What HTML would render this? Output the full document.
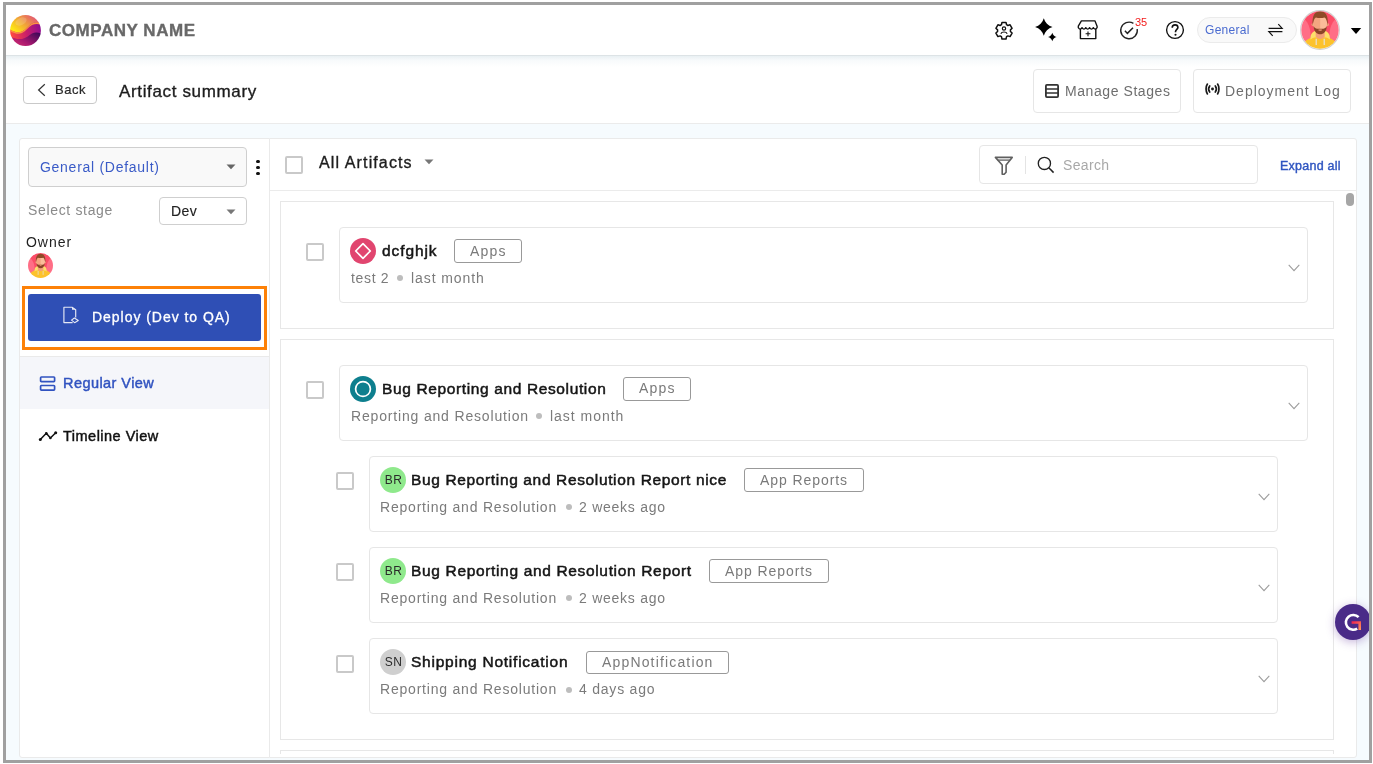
<!DOCTYPE html>
<html><head><meta charset="utf-8">
<style>
*{box-sizing:border-box;margin:0;padding:0}
html,body{width:1373px;height:764px;overflow:hidden;background:#fff;font-family:"Liberation Sans",sans-serif;color:#222}
.a{position:absolute;display:block}
.t{position:absolute;white-space:nowrap;line-height:1;will-change:transform}
#frame{position:absolute;left:3px;top:2px;width:1369px;height:761px;border:3px solid #a0a0a0;z-index:50;pointer-events:none}
#app{position:absolute;left:6px;top:5px;width:1363px;height:755px;overflow:hidden;background:#f6fbfe}
</style></head>
<body>
<div id="app">
<div style="position:absolute;left:-6px;top:-5px;width:1373px;height:764px">
<!-- header -->
<div class="a" style="left:6px;top:5px;width:1363px;height:51px;background:#fff;border-bottom:1px solid #dde3e6"></div>
<div class="a" style="left:6px;top:56px;width:1363px;height:68px;background:#fff;border-bottom:1px solid #ebebeb"></div>
<div class="a" style="left:6px;top:56px;width:1363px;height:11px;background:linear-gradient(#e9f0f3,rgba(240,245,248,0.5) 40%,rgba(255,255,255,0))"></div>

<!-- logo -->
<svg class="a" style="left:10px;top:14.5px" width="31" height="31" viewBox="0 0 31 31">
 <defs>
  <mask id="lc"><circle cx="15.5" cy="15.5" r="15.4" fill="#fff"/></mask>
  <linearGradient id="lg1" x1="0" y1="0.7" x2="1" y2="0.1"><stop offset="0" stop-color="#ffea10"/><stop offset="0.42" stop-color="#f0a238"/><stop offset="0.75" stop-color="#e5636a"/><stop offset="1" stop-color="#dc4478"/></linearGradient>
  <linearGradient id="lg2" x1="0" y1="0.5" x2="1" y2="0.3"><stop offset="0" stop-color="#ff4a40"/><stop offset="0.5" stop-color="#c91f6a"/><stop offset="1" stop-color="#8c0c92"/></linearGradient>
  <linearGradient id="lg3" x1="0" y1="0.9" x2="1" y2="0.2"><stop offset="0" stop-color="#dc3470"/><stop offset="0.45" stop-color="#a8186f"/><stop offset="1" stop-color="#3f0858"/></linearGradient>
 </defs>
 <g mask="url(#lc)">
  <rect width="31" height="31" fill="url(#lg2)"/>
  <path d="M-1 -1 H32 V8.2 C28 7 25 7 22 8.5 C18.5 10.5 16 14.5 12 16.5 C8 18.2 4 17 -1 13.8 Z" fill="url(#lg1)"/>
  <path d="M-1 13.8 C4 17 8 18.2 12 16.5 C16 14.5 18.5 10.5 22 8.5 C25 7 28 7 32 8.2 V9.8 C28 8.6 25 8.6 22 10.1 C18.5 12.1 16 16.1 12 18.1 C8 19.8 4 18.6 -1 15.4Z" fill="#fb9242"/>
  <path d="M-1 21 C3 23 7 24.5 12 24 C16 23.5 19 20.5 22 18.6 C25 17 28 17 32 19 V32 H-1 Z" fill="url(#lg3)"/>
  <ellipse cx="11" cy="6.5" rx="6" ry="3.6" transform="rotate(-25 11 6.5)" fill="#fff" opacity="0.16"/>
 </g>
</svg>

<!-- header icons -->
<svg class="a" style="left:992.9px;top:19px" width="22" height="22" viewBox="0 0 22 22">
 <g transform="translate(11 11) scale(0.88) translate(-11 -11)">
 <path d="M8.7 2.4 h4.6 l0.6 2.6 l1.5 0.9 l2.5-0.8 l2.3 4 l-1.9 1.8 v1.8 l1.9 1.8 l-2.3 4 l-2.5-0.8 l-1.5 0.9 l-0.6 2.6 h-4.6 l-0.6-2.6 l-1.5-0.9 l-2.5 0.8 l-2.3-4 l1.9-1.8 v-1.8 l-1.9-1.8 l2.3-4 l2.5 0.8 l1.5-0.9 Z" fill="none" stroke="#111" stroke-width="1.7" stroke-linejoin="round"/>
 <circle cx="11" cy="9.3" r="1.9" fill="none" stroke="#111" stroke-width="1.3"/>
 <path d="M7.4 15.2 C8.5 12.6 13.5 12.6 14.6 15.2" fill="none" stroke="#111" stroke-width="1.3"/>
 </g>
</svg>
<svg class="a" style="left:1034px;top:18px" width="24" height="24" viewBox="0 0 24 24">
 <path d="M9.80 0.30 C11.03 4.70 14.10 7.77 18.50 9.00 C14.10 10.23 11.03 13.30 9.80 17.70 C8.57 13.30 5.50 10.23 1.10 9.00 C5.50 7.77 8.57 4.70 9.80 0.30 Z" fill="#000"/>
 <path d="M18.30 14.70 C18.91 16.88 20.42 18.39 22.60 19.00 C20.42 19.61 18.91 21.12 18.30 23.30 C17.69 21.12 16.18 19.61 14.00 19.00 C16.18 18.39 17.69 16.88 18.30 14.70 Z" fill="#000"/>
</svg>
<svg class="a" style="left:1077px;top:20px" width="22" height="20" viewBox="0 0 22 20">
 <path d="M4.4 0.8 H17.9 L20.1 6.2 V7.6 Q18.22 10.6 16.34 7.6 Q14.46 10.6 12.58 7.6 Q10.70 10.6 8.82 7.6 Q6.94 10.6 5.06 7.6 Q3.18 10.6 1.30 7.6 V6.2 Z" fill="none" stroke="#111" stroke-width="1.35" stroke-linejoin="round"/>
 <path d="M3.4 8.8 V18.6 H18.8 V8.8" fill="none" stroke="#111" stroke-width="1.4" stroke-linejoin="round"/>
 <path d="M11 11.4 V16.2 M8.6 13.8 H13.4" stroke="#111" stroke-width="1.1"/>
</svg>
<svg class="a" style="left:1119px;top:20px" width="20" height="20" viewBox="0 0 20 20">
 <path d="M14.4 3.4 A8.3 8.3 0 1 0 18.2 9" fill="none" stroke="#222" stroke-width="1.35"/>
 <path d="M5.9 10.8 L8.4 13.4 L14 7.8" fill="none" stroke="#222" stroke-width="1.5"/>
</svg>
<svg class="a" style="left:1165px;top:20px" width="20" height="20" viewBox="0 0 20 20">
 <circle cx="10" cy="10" r="8.4" fill="none" stroke="#111" stroke-width="1.35"/>
 <path d="M7.2 7.7 C7.2 5.9 8.4 4.9 10.1 4.9 C11.8 4.9 12.9 6 12.9 7.5 C12.9 9.3 10.5 9.6 10.5 11.8 V12.2" fill="none" stroke="#111" stroke-width="1.6"/>
 <circle cx="10.5" cy="14.8" r="1.05" fill="#111"/>
</svg>
<!-- General pill -->
<div class="a" style="left:1197px;top:17px;width:100px;height:26px;border-radius:13px;background:#f9f9f9;border:1px solid #ebebeb"></div>
<svg class="a" style="left:1267px;top:23px" width="17" height="14" viewBox="0 0 17 14">
 <path d="M1.6 5.4 H15.2 L11.3 1.1" fill="none" stroke="#111" stroke-width="1.15"/>
 <path d="M15.4 8.6 H1.8 L5.7 12.9" fill="none" stroke="#111" stroke-width="1.15"/>
</svg>
<!-- avatar -->
<svg class="a" style="left:1300px;top:10px" width="40" height="40" viewBox="0 0 40 40">
 <defs><mask id="av"><circle cx="20" cy="20" r="18.7" fill="#fff"/></mask></defs>
 <circle cx="20" cy="20" r="19.4" fill="#fff" stroke="#d0d0d0" stroke-width="1.1"/>
 <g mask="url(#av)">
  <rect width="40" height="40" fill="#fb4d67"/>
  <path d="M0 6 C8 10 11.5 18 10.5 31 L0 35Z" fill="#ff6e86"/>
  <path d="M40 6 C32 10 28.5 18 29.5 31 L40 35Z" fill="#ff6e86"/>
  <path d="M1 41 C2 31 8 27 20 26.5 C32 27 38 31 39 41Z" fill="#fcc22c"/>
  <path d="M10.5 29.5 C10 22.5 14 20 20.2 20.3 C26.4 20 30.4 22.5 29.9 29.5 C26 26.3 14.4 26.3 10.5 29.5Z" fill="#fde06a"/>
  <path d="M15.7 19 H24.7 V26.5 C23 29.8 17.4 29.8 15.7 26.5Z" fill="#f3a078"/>
  <circle cx="13" cy="14.5" r="1.5" fill="#f0a07a"/><circle cx="27.5" cy="14.5" r="1.5" fill="#f0a07a"/>
  <ellipse cx="20.2" cy="13.2" rx="7" ry="9.2" fill="#fbbd99"/>
  <path d="M13.2 13.2 C13.2 7.8 16.3 4 20.2 4 V22.4 C16.3 22.4 13.2 18.6 13.2 13.2Z" fill="#f4a680"/>
  <path d="M12.7 15.5 C11.9 6 14.4 1.3 20.2 1.3 C26 1.3 28.5 6 27.7 15.5 C26.9 11 26.4 8.3 24.5 7.4 C22 8.2 18.4 8.2 15.9 7.4 C14 8.3 13.5 11 12.7 15.5Z" fill="#8e4b27"/>
  <path d="M13.6 16.2 C13.9 21.8 16.9 24.2 20.2 24.2 C23.5 24.2 26.5 21.8 26.8 16.2 C25.4 18.7 23.7 19 20.2 18.8 C16.7 19 15 18.7 13.6 16.2Z" fill="#8a4527"/>
  <path d="M18 20 C19.2 19.4 21.2 19.4 22.4 20 C21.2 20.9 19.2 20.9 18 20Z" fill="#f4a680"/>
  <path d="M16.2 28.8 V35 M24.2 28.8 V35" stroke="#e4e4e4" stroke-width="1.1"/>
 </g>
</svg>
<svg class="a" style="left:1350px;top:27px" width="12" height="8" viewBox="0 0 12 8"><path d="M0.8 0.9 H11.2 L6 6.9Z" fill="#000"/></svg>

<!-- sub header -->
<div class="a" style="left:23px;top:76px;width:74px;height:28px;border:1px solid #c9c9c9;border-radius:4px"></div>
<svg class="a" style="left:37px;top:83px" width="9" height="14" viewBox="0 0 9 14"><path d="M7.8 1.2 L1.6 7 L7.8 12.8" fill="none" stroke="#333" stroke-width="1.2"/></svg>
<div class="a" style="left:1033px;top:69px;width:148px;height:44px;border:1px solid #e6e6e6;border-radius:4px"></div>
<svg class="a" style="left:1045px;top:84px" width="14" height="14" viewBox="0 0 14 14"><rect x="0.9" y="0.9" width="12.2" height="12.2" rx="1" fill="none" stroke="#333" stroke-width="1.8"/><path d="M1 5 H13 M1 9 H13" stroke="#333" stroke-width="1.6"/></svg>
<div class="a" style="left:1193px;top:69px;width:158px;height:44px;border:1px solid #e6e6e6;border-radius:4px"></div>
<svg class="a" style="left:1205px;top:83px" width="15" height="12" viewBox="0 0 15 12">
 <circle cx="7.5" cy="6" r="1.45" fill="#1a1a1a"/>
 <path d="M4.7 3 C3.5 4.6 3.5 7.4 4.7 9 M10.3 3 C11.5 4.6 11.5 7.4 10.3 9" fill="none" stroke="#1a1a1a" stroke-width="1.7" stroke-linecap="round"/>
 <path d="M2.4 1.1 C0.6 3.6 0.6 8.4 2.4 10.9 M12.6 1.1 C14.4 3.6 14.4 8.4 12.6 10.9" fill="none" stroke="#1a1a1a" stroke-width="1.7" stroke-linecap="round"/>
</svg>

<!-- sidebar panel -->
<div class="a" style="left:19px;top:138px;width:251px;height:620px;background:#fff;border:1px solid #eaeaea;border-radius:3px 0 0 3px"></div>
<div class="a" style="left:28px;top:147px;width:219px;height:39.5px;background:#f9f9f9;border:1px solid #cfcfcf;border-radius:4px"></div>
<svg class="a" style="left:226px;top:164px" width="10" height="6" viewBox="0 0 10 6"><path d="M0.5 0.5 H9.5 L5 5.3Z" fill="#666"/></svg>
<div class="a" style="left:256.4px;top:160.3px;width:3.2px;height:3.2px;border-radius:50%;background:#111"></div>
<div class="a" style="left:256.4px;top:165.9px;width:3.2px;height:3.2px;border-radius:50%;background:#111"></div>
<div class="a" style="left:256.4px;top:171.5px;width:3.2px;height:3.2px;border-radius:50%;background:#111"></div>
<div class="a" style="left:159px;top:197px;width:88px;height:28px;background:#fff;border:1px solid #cfcfcf;border-radius:4px"></div>
<svg class="a" style="left:226px;top:208.5px" width="10" height="6" viewBox="0 0 10 6"><path d="M0.5 0.5 H9.5 L5 5.3Z" fill="#777"/></svg>
<!-- owner avatar -->
<svg class="a" style="left:28.3px;top:253px" width="25" height="25" viewBox="0 0 40 40">
 <defs><mask id="av2"><circle cx="20" cy="20" r="20" fill="#fff"/></mask></defs>
 <g mask="url(#av2)">
  <rect width="40" height="40" fill="#fb4d67"/>
  <path d="M0 6 C8 10 11.5 18 10.5 31 L0 35Z" fill="#ff6e86"/>
  <path d="M40 6 C32 10 28.5 18 29.5 31 L40 35Z" fill="#ff6e86"/>
  <path d="M1 41 C2 31 8 27 20 26.5 C32 27 38 31 39 41Z" fill="#fcc22c"/>
  <path d="M10.5 29.5 C10 22.5 14 20 20.2 20.3 C26.4 20 30.4 22.5 29.9 29.5 C26 26.3 14.4 26.3 10.5 29.5Z" fill="#fde06a"/>
  <path d="M15.7 19 H24.7 V26.5 C23 29.8 17.4 29.8 15.7 26.5Z" fill="#f3a078"/>
  <circle cx="13" cy="14.5" r="1.5" fill="#f0a07a"/><circle cx="27.5" cy="14.5" r="1.5" fill="#f0a07a"/>
  <ellipse cx="20.2" cy="13.2" rx="7" ry="9.2" fill="#fbbd99"/>
  <path d="M13.2 13.2 C13.2 7.8 16.3 4 20.2 4 V22.4 C16.3 22.4 13.2 18.6 13.2 13.2Z" fill="#f4a680"/>
  <path d="M12.7 15.5 C11.9 6 14.4 1.3 20.2 1.3 C26 1.3 28.5 6 27.7 15.5 C26.9 11 26.4 8.3 24.5 7.4 C22 8.2 18.4 8.2 15.9 7.4 C14 8.3 13.5 11 12.7 15.5Z" fill="#8e4b27"/>
  <path d="M13.6 16.2 C13.9 21.8 16.9 24.2 20.2 24.2 C23.5 24.2 26.5 21.8 26.8 16.2 C25.4 18.7 23.7 19 20.2 18.8 C16.7 19 15 18.7 13.6 16.2Z" fill="#8a4527"/>
  <path d="M18 20 C19.2 19.4 21.2 19.4 22.4 20 C21.2 20.9 19.2 20.9 18 20Z" fill="#f4a680"/>
  <path d="M16.2 28.8 V35 M24.2 28.8 V35" stroke="#e4e4e4" stroke-width="1.1"/>
 </g>
</svg>
<!-- deploy -->
<div class="a" style="left:22px;top:286px;width:245px;height:63.5px;border:3px solid #fd8107"></div>
<div class="a" style="left:28px;top:294px;width:233px;height:47px;background:#2f4fb5;border-radius:3px"></div>
<svg class="a" style="left:62px;top:306px" width="18" height="18" viewBox="0 0 18 18">
 <path d="M10.6 16.6 H1.9 V1.2 H10 L13.7 3.8 V11.4" fill="none" stroke="#e6e9f5" stroke-width="1.15" stroke-linejoin="round"/>
 <path d="M10 1.2 L13.7 3.8 H10 Z" fill="#e6e9f5"/>
 <path d="M9.5 14.2 L12.4 12 L16.3 14.5 L12.6 16.7 Z" fill="none" stroke="#e6e9f5" stroke-width="1.05" stroke-linejoin="round"/>
</svg>
<div class="a" style="left:20px;top:355.5px;width:249px;height:1px;background:#eaeaea"></div>
<div class="a" style="left:20px;top:356.5px;width:249px;height:52px;background:#f5f6fa"></div>
<svg class="a" style="left:39px;top:375.5px" width="17" height="16" viewBox="0 0 17 16">
 <rect x="1.6" y="1.0" width="14" height="4.6" rx="0.8" fill="none" stroke="#3153c0" stroke-width="1.7"/>
 <rect x="1.6" y="9.5" width="14" height="4.6" rx="0.8" fill="none" stroke="#3153c0" stroke-width="1.7"/>
</svg>
<svg class="a" style="left:38px;top:430px" width="20" height="12" viewBox="0 0 20 12">
 <path d="M2.3 9.4 L8.3 3.2 L12.4 8 L17.7 2.7" fill="none" stroke="#111" stroke-width="1.5" stroke-linejoin="round"/>
 <circle cx="2.3" cy="9.4" r="1.5" fill="#111"/><circle cx="8.3" cy="3.2" r="1.3" fill="#111"/><circle cx="12.4" cy="8" r="1.3" fill="#111"/><circle cx="17.7" cy="2.7" r="1.5" fill="#111"/>
</svg>

<!-- main panel -->
<div class="a" style="left:269px;top:138px;width:1088px;height:620px;background:#fff;border:1px solid #eaeaea;border-radius:0 3px 3px 0"></div>
<div class="a" style="left:270px;top:190px;width:1086px;height:1px;background:#ebebeb"></div>
<div class="a" style="left:285px;top:156px;width:18px;height:18px;border:2px solid #c9c9c9;border-radius:2px"></div>
<svg class="a" style="left:423.5px;top:159px" width="10" height="6" viewBox="0 0 10 6"><path d="M0.5 0.5 H9.5 L5 5.3Z" fill="#777"/></svg>
<div class="a" style="left:978.5px;top:145px;width:279px;height:39px;border:1px solid #e6e6e6;border-radius:4px"></div>
<svg class="a" style="left:993px;top:154.8px" width="22" height="22" viewBox="0 0 22 22">
 <path d="M2.4 2.4 H19.2 L13.1 10 V17.2 L11.2 19.3 L9.2 19.3 V10 Z" fill="none" stroke="#606060" stroke-width="1.6" stroke-linejoin="round"/>
 <path d="M4.6 5.1 H17" stroke="#606060" stroke-width="1.3"/>
</svg>
<div class="a" style="left:1024.6px;top:156px;width:1px;height:18px;background:#e4e4e4"></div>
<svg class="a" style="left:1036px;top:155px" width="20" height="20" viewBox="0 0 20 20">
 <circle cx="8.4" cy="8.4" r="6.1" fill="none" stroke="#222" stroke-width="1.35"/>
 <path d="M12.8 12.8 L17.6 17.6" stroke="#222" stroke-width="1.5"/>
</svg>
<!-- scrollbar thumb -->
<div class="a" style="left:1346px;top:193px;width:8px;height:13px;border-radius:4px;background:#a6a6a6"></div>

<!-- groups -->
<div class="a" style="left:0;top:0;width:1373px;height:764px;clip-path:inset(191px 17px 10px 270px)">
<div class="a" style="left:280px;top:201px;width:1054px;height:128px;border:1px solid #e7e7e7;background:#fff"></div>
<div class="a" style="left:280px;top:339px;width:1054px;height:400.5px;border:1px solid #e7e7e7;background:#fff"></div>
<div class="a" style="left:280px;top:750px;width:1054px;height:60px;border:1px solid #e7e7e7;background:#fff"></div>
<div class="a" style="left:339px;top:227px;width:969px;height:76px;border:1px solid #e6e6e6;border-radius:4px;background:#fff"></div>
<div class="a" style="left:306.0px;top:243.3px;width:18px;height:18px;border:2px solid #c9c9c9;border-radius:2px;background:#fff"></div>
<svg class="a" style="left:350.0px;top:238.0px" width="26" height="26" viewBox="0 0 26 26"><circle cx="13" cy="13" r="13" fill="#e1456f"/><path d="M13 5.7 L20.3 13 L13 20.3 L5.7 13 Z" fill="none" stroke="#fff" stroke-width="1.7" stroke-linejoin="round"/></svg>
<div class="a" style="left:454.0px;top:239.3px;width:68.0px;height:23.5px;border:1px solid #999;border-radius:3px"></div>
<div class="a" style="left:397.2px;top:275.4px;width:6px;height:6px;border-radius:50%;background:#bdbdbd"></div>
<svg class="a" style="left:1288.0px;top:263.7px" width="12" height="8" viewBox="0 0 12 8"><path d="M0.7 0.8 L6 6.6 L11.3 0.8" fill="none" stroke="#9c9c9c" stroke-width="1.05"/></svg>
<div class="a" style="left:339px;top:365px;width:969px;height:76px;border:1px solid #e6e6e6;border-radius:4px;background:#fff"></div>
<div class="a" style="left:306.0px;top:381.2px;width:18px;height:18px;border:2px solid #c9c9c9;border-radius:2px;background:#fff"></div>
<svg class="a" style="left:350.0px;top:375.9px" width="26" height="26" viewBox="0 0 26 26"><circle cx="13" cy="13" r="13" fill="#0e7f8e"/><circle cx="13" cy="13" r="7.4" fill="none" stroke="#fff" stroke-width="1.7"/></svg>
<div class="a" style="left:622.7px;top:377.2px;width:68.1px;height:23.5px;border:1px solid #999;border-radius:3px"></div>
<div class="a" style="left:536.0px;top:413.3px;width:6px;height:6px;border-radius:50%;background:#bdbdbd"></div>
<svg class="a" style="left:1288.0px;top:401.6px" width="12" height="8" viewBox="0 0 12 8"><path d="M0.7 0.8 L6 6.6 L11.3 0.8" fill="none" stroke="#9c9c9c" stroke-width="1.05"/></svg>
<div class="a" style="left:369px;top:456px;width:909px;height:76px;border:1px solid #e6e6e6;border-radius:4px;background:#fff"></div>
<div class="a" style="left:336.3px;top:472.3px;width:18px;height:18px;border:2px solid #c9c9c9;border-radius:2px;background:#fff"></div>
<div class="a" style="left:379.8px;top:467.0px;width:26px;height:26px;border-radius:50%;background:#8fe98c"></div>
<div class="t" style="left:379.8px;top:473.7px;width:26px;text-align:center;font-size:12px;color:#2a2a2a;letter-spacing:0.6px;text-indent:1.3px">BR</div>
<div class="a" style="left:743.9px;top:468.3px;width:119.7px;height:23.5px;border:1px solid #999;border-radius:3px"></div>
<div class="a" style="left:566.0px;top:504.4px;width:6px;height:6px;border-radius:50%;background:#bdbdbd"></div>
<svg class="a" style="left:1258.0px;top:492.7px" width="12" height="8" viewBox="0 0 12 8"><path d="M0.7 0.8 L6 6.6 L11.3 0.8" fill="none" stroke="#9c9c9c" stroke-width="1.05"/></svg>
<div class="a" style="left:369px;top:547px;width:909px;height:76px;border:1px solid #e6e6e6;border-radius:4px;background:#fff"></div>
<div class="a" style="left:336.3px;top:563.3px;width:18px;height:18px;border:2px solid #c9c9c9;border-radius:2px;background:#fff"></div>
<div class="a" style="left:379.8px;top:558.0px;width:26px;height:26px;border-radius:50%;background:#8fe98c"></div>
<div class="t" style="left:379.8px;top:564.7px;width:26px;text-align:center;font-size:12px;color:#2a2a2a;letter-spacing:0.6px;text-indent:1.3px">BR</div>
<div class="a" style="left:708.9px;top:559.3px;width:120.1px;height:23.5px;border:1px solid #999;border-radius:3px"></div>
<div class="a" style="left:566.0px;top:595.4px;width:6px;height:6px;border-radius:50%;background:#bdbdbd"></div>
<svg class="a" style="left:1258.0px;top:583.7px" width="12" height="8" viewBox="0 0 12 8"><path d="M0.7 0.8 L6 6.6 L11.3 0.8" fill="none" stroke="#9c9c9c" stroke-width="1.05"/></svg>
<div class="a" style="left:369px;top:638px;width:909px;height:76px;border:1px solid #e6e6e6;border-radius:4px;background:#fff"></div>
<div class="a" style="left:336.3px;top:654.6px;width:18px;height:18px;border:2px solid #c9c9c9;border-radius:2px;background:#fff"></div>
<div class="a" style="left:379.8px;top:649.3px;width:26px;height:26px;border-radius:50%;background:#cfcfcf"></div>
<div class="t" style="left:379.8px;top:656.0px;width:26px;text-align:center;font-size:12px;color:#2a2a2a;letter-spacing:0.6px;text-indent:1.3px">SN</div>
<div class="a" style="left:585.8px;top:650.6px;width:143.1px;height:23.5px;border:1px solid #999;border-radius:3px"></div>
<div class="a" style="left:566.0px;top:686.7px;width:6px;height:6px;border-radius:50%;background:#bdbdbd"></div>
<svg class="a" style="left:1258.0px;top:675.0px" width="12" height="8" viewBox="0 0 12 8"><path d="M0.7 0.8 L6 6.6 L11.3 0.8" fill="none" stroke="#9c9c9c" stroke-width="1.05"/></svg>
<div class="t" style="left:381.5px;top:242.8px;font-size:15.5px;font-weight:normal;color:#151515;letter-spacing:0.91px;-webkit-text-stroke:0.5px #151515">dcfghjk</div>
<div class="t" style="left:350.5px;top:270.9px;font-size:14px;font-weight:normal;color:#7b7b7b;letter-spacing:0.65px;">test 2</div>
<div class="t" style="left:411.4px;top:270.9px;font-size:14px;font-weight:normal;color:#7b7b7b;letter-spacing:0.91px;">last month</div>
<div class="t" style="left:470.2px;top:243.5px;font-size:14px;font-weight:normal;color:#7a7a7a;letter-spacing:1.23px;">Apps</div>
<div class="t" style="left:381.5px;top:380.7px;font-size:15.5px;font-weight:normal;color:#151515;letter-spacing:0.63px;-webkit-text-stroke:0.5px #151515">Bug Reporting and Resolution</div>
<div class="t" style="left:350.5px;top:408.8px;font-size:14px;font-weight:normal;color:#7b7b7b;letter-spacing:0.83px;">Reporting and Resolution</div>
<div class="t" style="left:549.6px;top:408.8px;font-size:14px;font-weight:normal;color:#7b7b7b;letter-spacing:0.98px;">last month</div>
<div class="t" style="left:639.0px;top:381.4px;font-size:14px;font-weight:normal;color:#7a7a7a;letter-spacing:1.23px;">Apps</div>
<div class="t" style="left:411.3px;top:471.8px;font-size:15.5px;font-weight:normal;color:#151515;letter-spacing:0.64px;-webkit-text-stroke:0.5px #151515">Bug Reporting and Resolution Report nice</div>
<div class="t" style="left:380.3px;top:499.9px;font-size:14px;font-weight:normal;color:#7b7b7b;letter-spacing:0.79px;">Reporting and Resolution</div>
<div class="t" style="left:579.4px;top:499.9px;font-size:14px;font-weight:normal;color:#7b7b7b;letter-spacing:0.75px;">2 weeks ago</div>
<div class="t" style="left:760.2px;top:472.5px;font-size:14px;font-weight:normal;color:#7a7a7a;letter-spacing:0.93px;">App Reports</div>
<div class="t" style="left:411.3px;top:562.8px;font-size:15.5px;font-weight:normal;color:#151515;letter-spacing:0.66px;-webkit-text-stroke:0.5px #151515">Bug Reporting and Resolution Report</div>
<div class="t" style="left:380.3px;top:590.9px;font-size:14px;font-weight:normal;color:#7b7b7b;letter-spacing:0.79px;">Reporting and Resolution</div>
<div class="t" style="left:579.4px;top:590.9px;font-size:14px;font-weight:normal;color:#7b7b7b;letter-spacing:0.75px;">2 weeks ago</div>
<div class="t" style="left:725.4px;top:563.5px;font-size:14px;font-weight:normal;color:#7a7a7a;letter-spacing:0.93px;">App Reports</div>
<div class="t" style="left:411.3px;top:654.1px;font-size:15.5px;font-weight:normal;color:#151515;letter-spacing:0.76px;-webkit-text-stroke:0.5px #151515">Shipping Notification</div>
<div class="t" style="left:380.3px;top:682.2px;font-size:14px;font-weight:normal;color:#7b7b7b;letter-spacing:0.79px;">Reporting and Resolution</div>
<div class="t" style="left:579.4px;top:682.2px;font-size:14px;font-weight:normal;color:#7b7b7b;letter-spacing:0.78px;">4 days ago</div>
<div class="t" style="left:602.1px;top:654.8px;font-size:14px;font-weight:normal;color:#7a7a7a;letter-spacing:1.16px;">AppNotification</div>
</div>
<div class="t" style="left:49.4px;top:21.5px;font-size:17px;font-weight:bold;color:#686868;letter-spacing:0.54px;-webkit-text-stroke:0.35px #686868">COMPANY NAME</div>
<div class="t" style="left:1204.6px;top:23.5px;font-size:12px;font-weight:normal;color:#4a6bd0;letter-spacing:0.30px;">General</div>
<div class="t" style="left:1135.1px;top:16.5px;font-size:11px;font-weight:normal;color:#f21b1b;letter-spacing:-0.24px;">35</div>
<div class="t" style="left:54.7px;top:82.9px;font-size:13px;font-weight:normal;color:#2a2a2a;letter-spacing:0.53px;-webkit-text-stroke:0.2px #2a2a2a">Back</div>
<div class="t" style="left:119.3px;top:82.7px;font-size:17px;font-weight:normal;color:#1d1d1d;letter-spacing:0.65px;-webkit-text-stroke:0.35px #1d1d1d">Artifact summary</div>
<div class="t" style="left:1064.5px;top:84.1px;font-size:14px;font-weight:normal;color:#6e6e6e;letter-spacing:0.57px;">Manage Stages</div>
<div class="t" style="left:1224.7px;top:84.1px;font-size:14px;font-weight:normal;color:#6e6e6e;letter-spacing:0.99px;">Deployment Log</div>
<div class="t" style="left:39.6px;top:159.8px;font-size:14px;font-weight:normal;color:#3a5bc7;letter-spacing:0.72px;">General (Default)</div>
<div class="t" style="left:28.4px;top:203.2px;font-size:14px;font-weight:normal;color:#8a8a8a;letter-spacing:0.66px;">Select stage</div>
<div class="t" style="left:171.2px;top:204.1px;font-size:14px;font-weight:normal;color:#222;letter-spacing:0.40px;-webkit-text-stroke:0.15px #222">Dev</div>
<div class="t" style="left:25.6px;top:235.0px;font-size:14px;font-weight:normal;color:#222;letter-spacing:0.97px;">Owner</div>
<div class="t" style="left:92.4px;top:310.0px;font-size:14px;font-weight:normal;color:#fff;letter-spacing:0.96px;-webkit-text-stroke:0.3px #fff">Deploy (Dev to QA)</div>
<div class="t" style="left:62.5px;top:375.8px;font-size:14.5px;font-weight:normal;color:#3153c0;letter-spacing:0.44px;-webkit-text-stroke:0.45px #3153c0">Regular View</div>
<div class="t" style="left:62.5px;top:428.9px;font-size:14.5px;font-weight:normal;color:#111;letter-spacing:0.49px;-webkit-text-stroke:0.45px #111">Timeline View</div>
<div class="t" style="left:319.2px;top:154.5px;font-size:16px;font-weight:normal;color:#1d1d1d;letter-spacing:1.12px;-webkit-text-stroke:0.35px #1d1d1d">All Artifacts</div>
<div class="t" style="left:1062.6px;top:157.9px;font-size:14px;font-weight:normal;color:#a8a8a8;letter-spacing:0.35px;">Search</div>
<div class="t" style="left:1279.6px;top:159.5px;font-size:12.5px;font-weight:normal;color:#2f55c0;letter-spacing:0.25px;-webkit-text-stroke:0.4px #2f55c0">Expand all</div>

<!-- G button -->
<div class="a" style="left:1335px;top:604px;width:36px;height:36px;border-radius:50%;background:#4a2b88;box-shadow:0 2px 10px rgba(90,40,150,0.35)"></div>
<svg class="a" style="left:1341px;top:610px" width="24" height="24" viewBox="0 0 24 24">
 <defs><linearGradient id="gg" x1="0" y1="0" x2="1" y2="1"><stop offset="0" stop-color="#f2244f"/><stop offset="1" stop-color="#ff9458"/></linearGradient></defs>
 <path d="M17.6 7.2 A7.4 7.4 0 1 0 16.2 18.6" fill="none" stroke="#fff" stroke-width="2.6"/>
 <path d="M10.6 12.5 H18.7 V20" fill="none" stroke="url(#gg)" stroke-width="2.6"/>
</svg>
</div>
</div>
<div id="frame"></div>
</body></html>
